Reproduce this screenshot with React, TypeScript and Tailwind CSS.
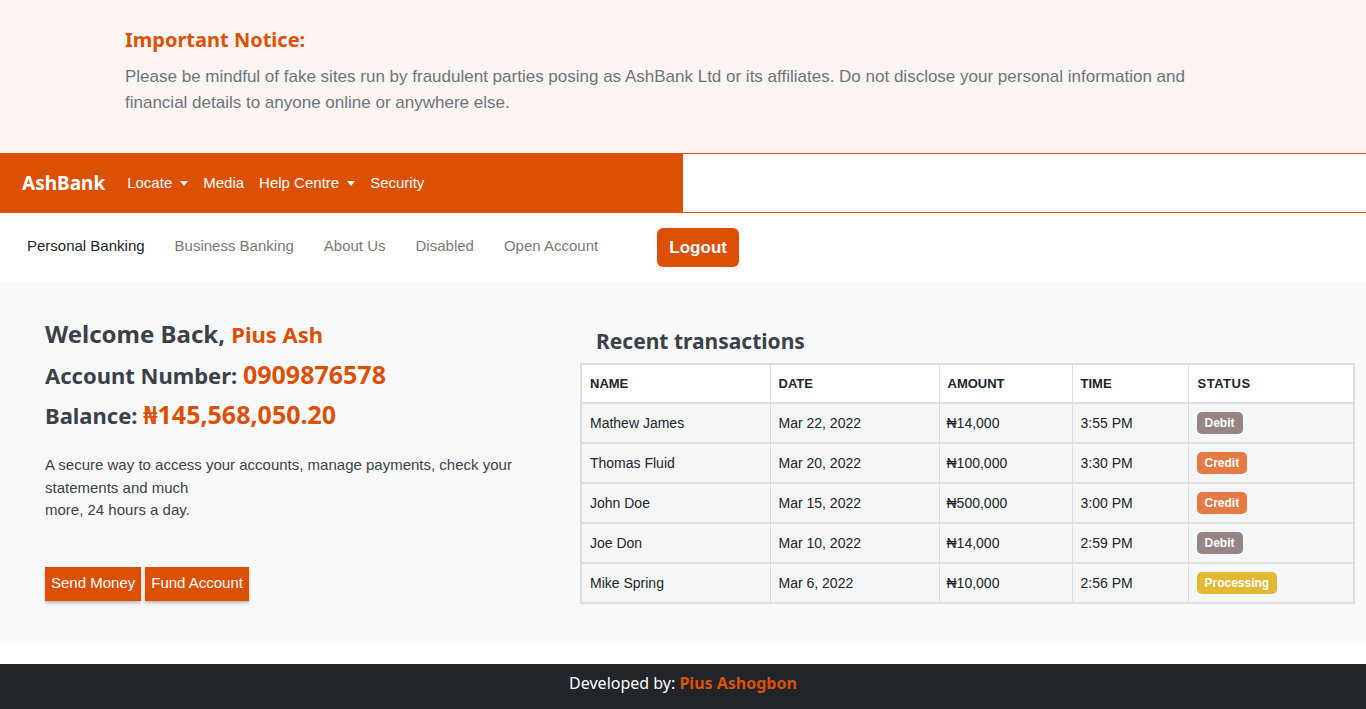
import React from "react"

const heading = "font-['Segoe_UI','Noto_Sans','Open_Sans',sans-serif]"

const rows = [
  { name: "Mathew James", date: "Mar 22, 2022", amount: "₦14,000", time: "3:55 PM", status: "Debit" },
  { name: "Thomas Fluid", date: "Mar 20, 2022", amount: "₦100,000", time: "3:30 PM", status: "Credit" },
  { name: "John Doe", date: "Mar 15, 2022", amount: "₦500,000", time: "3:00 PM", status: "Credit" },
  { name: "Joe Don", date: "Mar 10, 2022", amount: "₦14,000", time: "2:59 PM", status: "Debit" },
  { name: "Mike Spring", date: "Mar 6, 2022", amount: "₦10,000", time: "2:56 PM", status: "Processing" },
]

function Badge({ status }: { status: string }) {
  const color =
    status === "Debit" ? "bg-[#978584]" : status === "Credit" ? "bg-[#e57a45]" : "bg-[#e3b934]"
  return (
    <span className={`${color} inline-block rounded-[5px] px-[8px] py-[3px] text-[12px] font-bold leading-[16px] text-white`}>
      {status}
    </span>
  )
}

function Caret() {
  return <span className="ml-[8px] inline-block h-0 w-0 border-x-[4px] border-t-[5px] border-x-transparent border-t-white align-middle" />
}

export default function App() {
  return (
    <div className="min-h-[709px] bg-white font-['Liberation_Sans',Arial,sans-serif]">
      {/* Notice */}
      <section className="h-[153px] bg-[#fef4f1]">
        <div className="mx-auto max-w-[1140px] px-[12px] pt-[27px]">
          <h2 className={`${heading} text-[20px] font-bold leading-[26px] text-[#dc5004]`}>Important Notice:</h2>
          <p className="mt-[11px] w-[1116px] text-[17px] leading-[26px] text-[#6c757d]">
            Please be mindful of fake sites run by fraudulent parties posing as AshBank Ltd or its affiliates. Do not disclose your personal information and financial details to anyone online or anywhere else.
          </p>
        </div>
      </section>

      {/* Top nav */}
      <nav className="flex h-[60px] border-y border-[#dc5004]">
        <div className="flex w-1/2 items-center bg-[#dc5004] pl-[22px]">
          <span className={`${heading} mr-[22px] text-[19px] font-bold text-white`}>AshBank</span>
          <div className="flex items-center gap-[15px] text-[15px] text-white">
            <span>Locate<Caret /></span>
            <span>Media</span>
            <span>Help Centre<Caret /></span>
            <span>Security</span>
          </div>
        </div>
        <div className="w-1/2 bg-white" />
      </nav>

      {/* Secondary nav */}
      <div className="flex h-[69px] items-center pb-[2px] pl-[12px] text-[15px]">
        <span className="px-[15px] text-[#212529]">Personal Banking</span>
        <span className="px-[15px] text-[#7a7a7a]">Business Banking</span>
        <span className="px-[15px] text-[#7a7a7a]">About Us</span>
        <span className="px-[15px] text-[#7a7a7a]">Disabled</span>
        <span className="px-[15px] text-[#7a7a7a]">Open Account</span>
        <button className="ml-[44px] mt-[2px] h-[39px] w-[82px] rounded-[6px] bg-[#dc5004] text-[17px] font-bold text-white">
          Logout
        </button>
      </div>

      {/* Main */}
      <main className="flex h-[359px] bg-[#f8f9fa]">
        <div className="w-[535px] pl-[45px] pt-[36px]">
          <div className={`${heading} font-bold text-[#3a4149]`}>
            <div className="text-[24px] leading-[32px]">
              Welcome Back, <span className="text-[22px] text-[#dc5004]">Pius Ash</span>
            </div>
            <div className="mt-[8px] text-[22px] leading-[32px]">
              Account Number: <span className="text-[25px] text-[#dc5004]">0909876578</span>
            </div>
            <div className="mt-[7px] text-[22px] leading-[32px]">
              Balance: <span className="text-[25px] text-[#dc5004]">₦145,568,050.20</span>
            </div>
          </div>
          <p className="mt-[23px] w-[480px] text-[15px] leading-[22.5px] text-[#3d4247]">
            A secure way to access your accounts, manage payments, check your statements and much
            <br />
            more, 24 hours a day.
          </p>
          <div className="mt-[45px] flex gap-[4px]">
            <button className="h-[34px] bg-[#dc5004] px-[6px] text-[15px] text-white shadow-[0_2px_3px_rgba(0,0,0,0.25)]">
              Send Money
            </button>
            <button className="h-[34px] bg-[#dc5004] px-[6px] text-[15px] text-white shadow-[0_2px_3px_rgba(0,0,0,0.25)]">
              Fund Account
            </button>
          </div>
        </div>

        <div className="pt-[44px] pl-[45px]">
          <h3 className={`${heading} ml-[16px] text-[21px] font-bold leading-[30px] text-[#3a4149]`}>Recent transactions</h3>
          <table className="mt-[7px] w-[775px] border-collapse border-2 border-[#dedfe0] text-[14px] text-[#212529]">
            <thead>
              <tr className="h-[39px] bg-white text-left text-[13px] font-bold uppercase">
                <th className="w-[189px] border-r border-[#dedfe0] pl-[8px]">Name</th>
                <th className="w-[169px] border-r border-[#dedfe0] pl-[8px]">Date</th>
                <th className="w-[133px] border-r border-[#dedfe0] pl-[8px]">Amount</th>
                <th className="w-[116px] border-r border-[#dedfe0] pl-[8px]">Time</th>
                <th className="pl-[9px] tracking-[0.5px]">Status</th>
              </tr>
            </thead>
            <tbody>
              {rows.map((r) => (
                <tr key={r.name} className="h-[40px] border-t-2 border-[#dedfe0] bg-[#f5f6f7]">
                  <td className="border-r border-[#dedfe0] pl-[8px]">{r.name}</td>
                  <td className="border-r border-[#dedfe0] pl-[8px]">{r.date}</td>
                  <td className="border-r border-[#dedfe0] pl-[7px]">{r.amount}</td>
                  <td className="border-r border-[#dedfe0] pl-[8px]">{r.time}</td>
                  <td className="pl-[8px]"><Badge status={r.status} /></td>
                </tr>
              ))}
            </tbody>
          </table>
        </div>
      </main>

      <div className="h-[23px] bg-white" />

      {/* Footer */}
      <footer className={`${heading} flex h-[45px] items-center justify-center bg-[#212529] pb-[7px] text-[16px] text-white`}>
        Developed by:&nbsp;<span className="font-bold text-[#dc5004]">Pius Ashogbon</span>
      </footer>
    </div>
  )
}
